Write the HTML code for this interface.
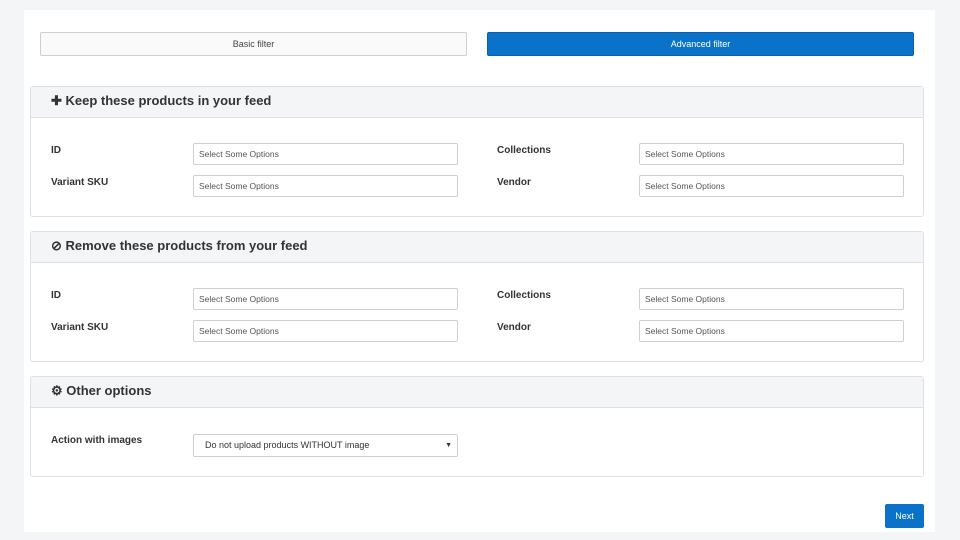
<!DOCTYPE html><html><head><style>
body{margin:0;width:960px;height:540px;background:#f4f5f7;font-family:"Liberation Sans",sans-serif;position:relative;overflow:hidden}
.a{position:absolute;box-sizing:border-box}
.card{left:24px;top:10px;width:911px;height:522px;background:#fff}
.btn{height:24px;border-radius:2px;font-size:9px;text-align:center;line-height:22px}
.panel{left:30px;width:894px;border:1px solid #dde0e4;border-radius:3px;background:#fff}
.ph{left:0;top:0;right:0;height:31px;background:#f4f5f7;border-bottom:1px solid #dde0e4;font-size:13px;color:#333;line-height:28px;padding-left:20px;font-weight:bold}
.lbl{font-size:10px;color:#333;font-weight:bold}
.inp{width:265px;height:22px;border:1px solid #ccd0d5;border-radius:2px;font-size:8.5px;color:#555;line-height:20px;padding-left:5px}
</style></head><body>
<div class="a card"></div>
<div class="a btn" style="left:40px;top:32px;width:427px;border:1px solid #ccd0d5;background:#fafafa;color:#444">Basic filter</div>
<div class="a btn" style="left:487px;top:32px;width:427px;background:#0a72c8;color:#fff;border:1px solid #0862ad">Advanced filter</div>

<div class="a panel" style="top:86px;height:131px"><div class="a ph">✚ Keep these products in your feed</div></div>
<div class="a panel" style="top:231px;height:131px"><div class="a ph">⊘ Remove these products from your feed</div></div>
<div class="a panel" style="top:376px;height:101px"><div class="a ph">⚙ Other options</div></div>

<div class="a lbl" style="left:51px;top:145px">ID</div>
<div class="a lbl" style="left:51px;top:177px">Variant SKU</div>
<div class="a lbl" style="left:497px;top:145px">Collections</div>
<div class="a lbl" style="left:497px;top:177px">Vendor</div>
<div class="a inp" style="left:193px;top:143px">Select Some Options</div>
<div class="a inp" style="left:193px;top:175px">Select Some Options</div>
<div class="a inp" style="left:639px;top:143px">Select Some Options</div>
<div class="a inp" style="left:639px;top:175px">Select Some Options</div>

<div class="a lbl" style="left:51px;top:290px">ID</div>
<div class="a lbl" style="left:51px;top:322px">Variant SKU</div>
<div class="a lbl" style="left:497px;top:290px">Collections</div>
<div class="a lbl" style="left:497px;top:322px">Vendor</div>
<div class="a inp" style="left:193px;top:288px">Select Some Options</div>
<div class="a inp" style="left:193px;top:320px">Select Some Options</div>
<div class="a inp" style="left:639px;top:288px">Select Some Options</div>
<div class="a inp" style="left:639px;top:320px">Select Some Options</div>

<div class="a lbl" style="left:51px;top:435px">Action with images</div>
<div class="a inp" style="left:193px;top:434px;height:23px;line-height:21px;padding-left:11px;font-size:9px;color:#333">Do not upload products WITHOUT image<span style="position:absolute;right:5px;font-size:7px">▼</span></div>

<div class="a btn" style="left:885px;top:504px;width:39px;height:24px;background:#0a72c8;color:#fff;border-radius:2px;line-height:24px">Next</div>
</body></html>
